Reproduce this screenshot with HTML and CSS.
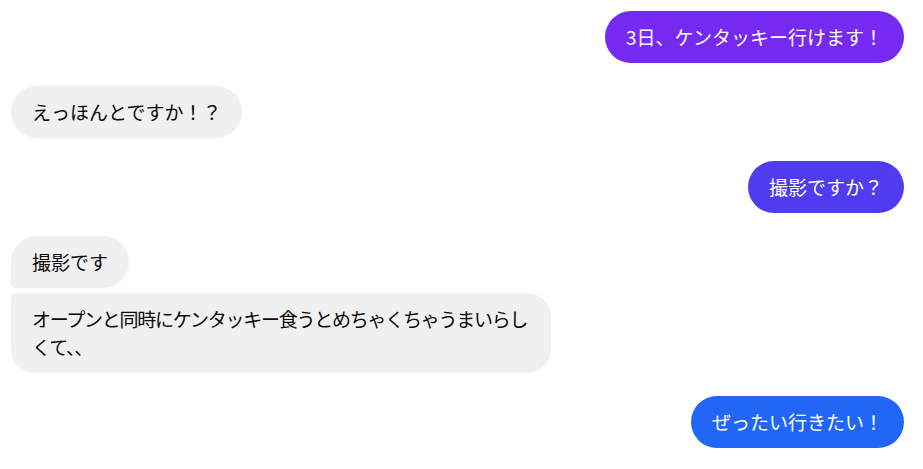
FILE: index.html
```html
<!DOCTYPE html>
<html lang="ja">
<head>
  <meta charset="UTF-8">
  <meta name="viewport" content="width=device-width, initial-scale=1.0">
  <title>Chat</title>
  <link rel="stylesheet" href="styles.css">
</head>
<body>

  <div class="thread">
    <div class="row out">
      <div class="bubble purple">3日、ケンタッキー行けます！</div>
    </div>

    <div class="row in">
      <div class="bubble">えっほんとですか！？</div>
    </div>

    <div class="row out">
      <div class="bubble violet">撮影ですか？</div>
    </div>

    <div class="group in">
      <div class="bubble first">撮影です</div>
      <div class="bubble last">オープンと同時にケンタッキー食うとめちゃくちゃうまいらしくて、、</div>
    </div>

    <div class="row out">
      <div class="bubble blue">ぜったい行きたい！</div>
    </div>
  </div>

</body>
</html>
```

FILE: styles.css
```css
body {
  margin: 0;
  background: #fff;
  font-family: "Noto Sans CJK JP", "Noto Sans", sans-serif;
}

.thread {
  display: flex;
  flex-direction: column;
  gap: 23px;
  padding: 11px 19px 11px 11px;
}

.row,
.group {
  display: flex;
  flex-direction: column;
}

.group {
  gap: 5px;
}

.out {
  align-items: flex-end;
}

.in {
  align-items: flex-start;
}

.bubble {
  max-width: 540px;
  box-sizing: border-box;
  padding: 12px 21px;
  border-radius: 26px;
  background: #f0f0f0;
  color: #0a0a0a;
  font-size: 19px;
  line-height: 28px;
}

.purple {
  background: #7629f1;
  color: #fff;
}

.violet {
  background: #4f3cf1;
  color: #fff;
}

.blue {
  background: #2166f4;
  color: #fff;
}

.first {
  border-bottom-left-radius: 5px;
}

/* long message: kana run a little tighter */
.last {
  letter-spacing: -1.25px;
  border-radius: 5px 24px 24px 24px;
}
```
